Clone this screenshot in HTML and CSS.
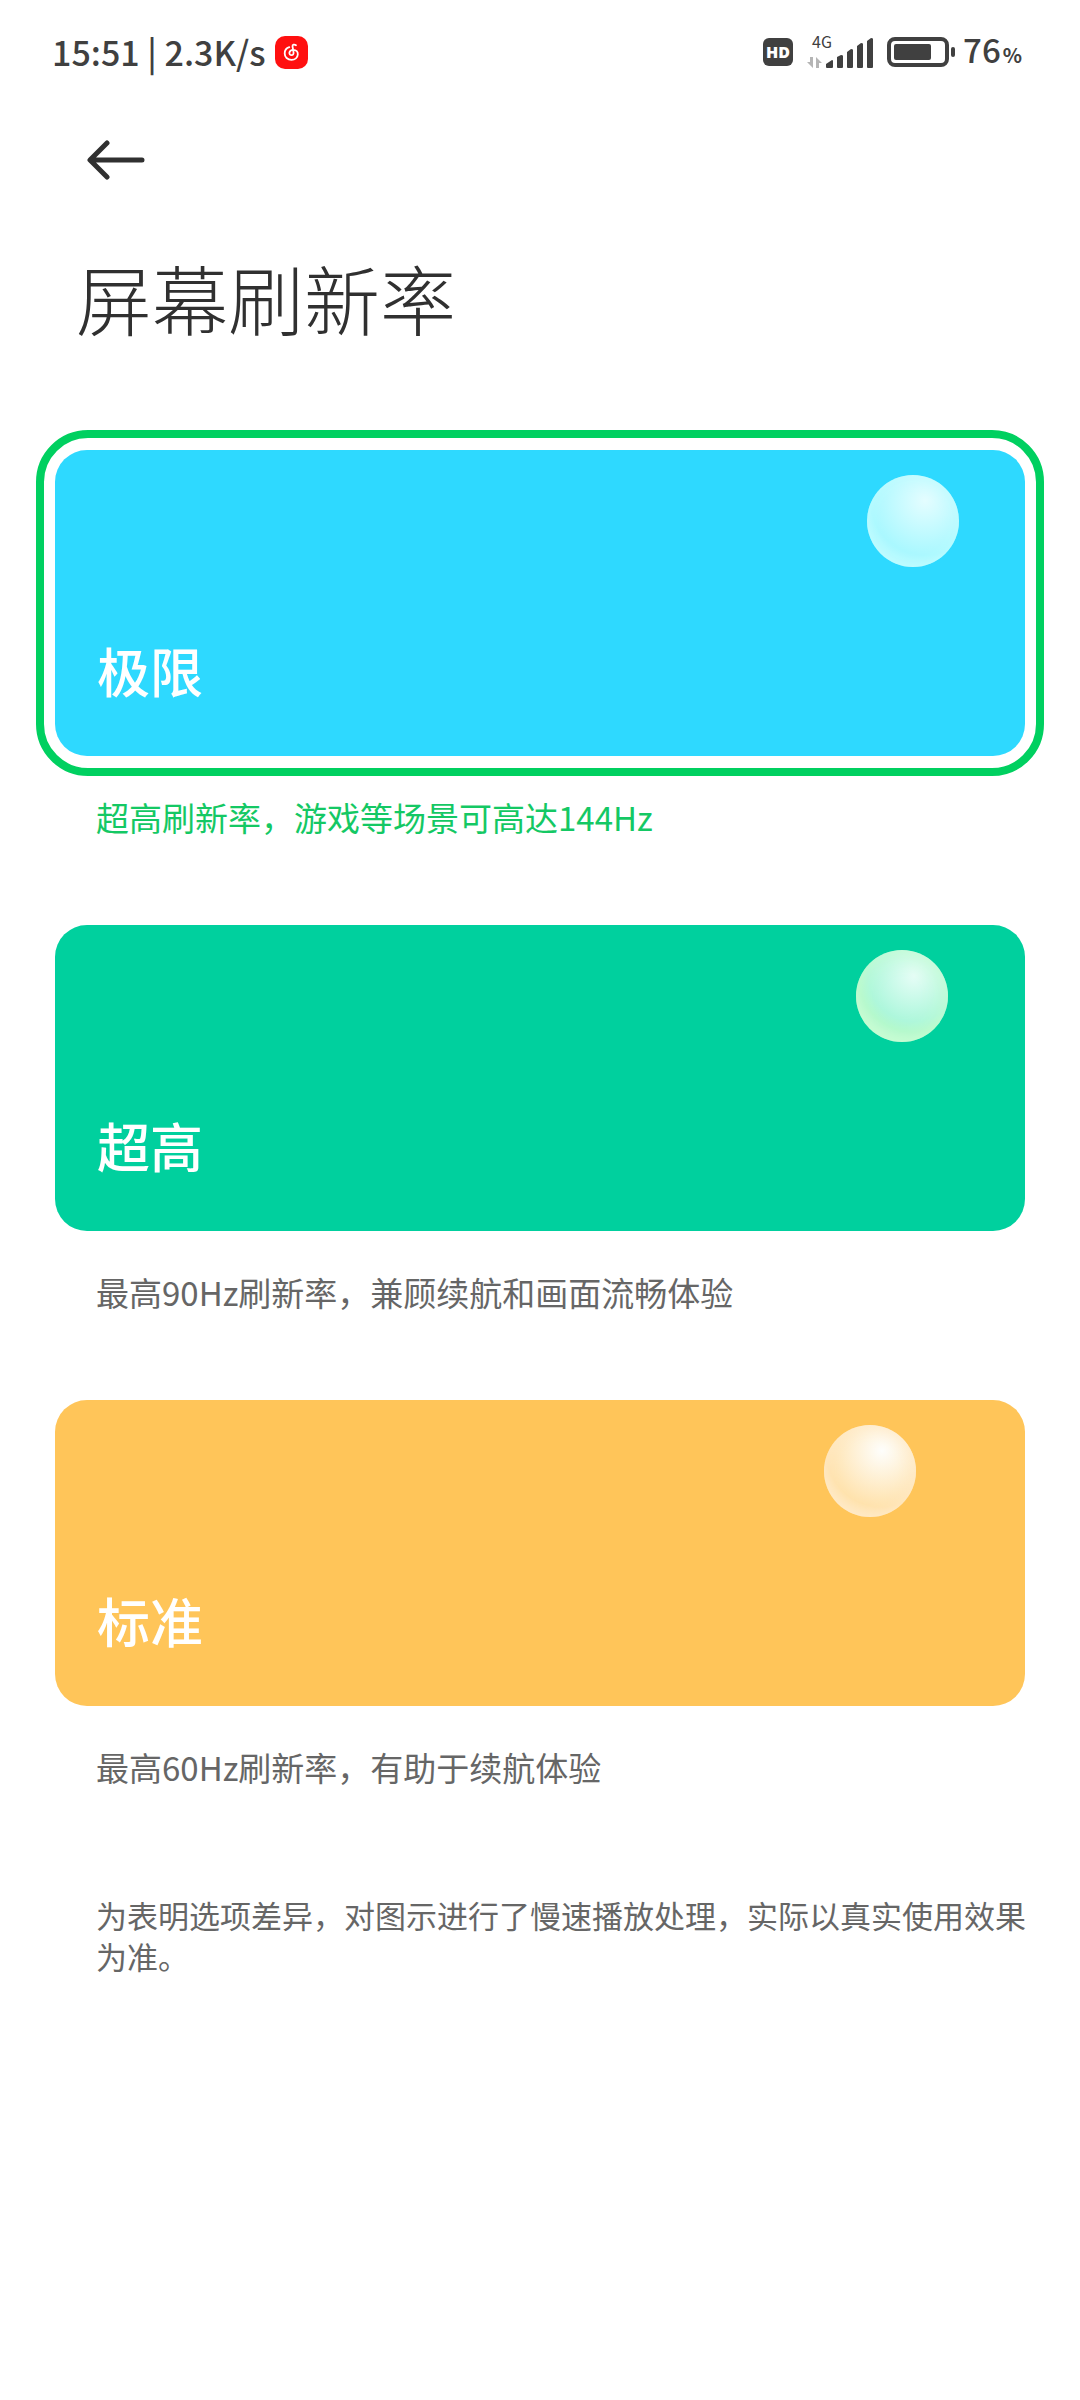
FILE: index.html
```html
<!DOCTYPE html>
<html lang="zh-CN">
<head>
    <meta charset="UTF-8">
    <meta name="viewport" content="width=device-width, initial-scale=1.0">
    <title>屏幕刷新率</title>
    <link rel="stylesheet" href="styles.css">
</head>
<body>
    <div class="status-bar">
        <div class="status-left">
            <span>15:51 | 2.3K/s</span>
            <svg width="33" height="33" viewBox="0 0 33 33" aria-hidden="true">
                <rect width="33" height="33" rx="10" fill="#ff1010"/>
                <path d="M21 9.200c-1.600-1.100-3.800-.6-3.500 1.200l1 5.600c.4 2.200-.7 3.200-1.900 3.200-1.500 0-2.400-1.100-2.200-2.500.3-1.900 2-2.800 4-2.800 2.800 0 4.600 1.900 4.400 4.500-.2 3.300-2.900 5.500-6.300 5.500-4 0-6.800-2.900-6.800-6.500 0-2.900 1.700-5.300 4.600-6.200" fill="none" stroke="#fff" stroke-width="1.800" stroke-linecap="round"/>
            </svg>
        </div>
        <div class="status-right">
            <span class="hd">HD</span>
            <div class="network">
                <span class="network-type">4G</span>
                <svg width="66" height="31" viewBox="0 0 66 31" aria-hidden="true">
                    <path d="M6 20v11L0 25h3v-5zM9 31V20l6 6h-3v5z" fill="#b5b5b5"/>
                    <path d="M19 27l6-4q1 0 1 1v6q0 1-1 1h-5q-1 0-1-1zM30 20l4-2q2 0 2 1v11q0 1-1 1h-4q-1 0-1-1zM40 15l4-3q2 0 2 1v17q0 1-1 1h-4q-1 0-1-1zM50 9l4-3q2 0 2 1v23q0 1-1 1h-4q-1 0-1-1zM60 4l4-3q2 0 2 1v28q0 1-1 1h-4q-1 0-1-1z" fill="#404040"/>
                </svg>
            </div>
            <svg width="70" height="30" viewBox="0 0 70 30" aria-hidden="true">
                <rect x="2" y="2" width="58" height="26" rx="6" fill="none" stroke="#404040" stroke-width="4"/>
                <rect x="7" y="7" width="37" height="16" rx="2" fill="#404040"/>
                <rect x="64" y="10" width="4" height="10" rx="2" fill="#404040"/>
            </svg>
            <span class="battery-level">76<small class="percent">%</small></span>
        </div>
    </div>

    <header class="header">
        <button class="back" type="button" aria-label="返回">
            <svg width="58" height="40" viewBox="0 0 58 40" aria-hidden="true">
                <path d="M20 3L3 20l17 17M4 20h51" fill="none" stroke="#303030" stroke-width="5" stroke-linecap="round" stroke-linejoin="round"/>
            </svg>
        </button>
        <h1>屏幕刷新率</h1>
    </header>

    <main class="options">
        <label class="option">
            <input type="radio" name="rate" value="144" checked>
            <span class="ring">
                <span class="card card-blue">
                    <span class="ball"></span>
                    <span class="name">极限</span>
                </span>
            </span>
            <span class="desc">超高刷新率，游戏等场景可高达144Hz</span>
        </label>
        <label class="option">
            <input type="radio" name="rate" value="90">
            <span class="ring">
                <span class="card card-green">
                    <span class="ball"></span>
                    <span class="name">超高</span>
                </span>
            </span>
            <span class="desc">最高90Hz刷新率，兼顾续航和画面流畅体验</span>
        </label>
        <label class="option">
            <input type="radio" name="rate" value="60">
            <span class="ring">
                <span class="card card-orange">
                    <span class="ball"></span>
                    <span class="name">标准</span>
                </span>
            </span>
            <span class="desc">最高60Hz刷新率，有助于续航体验</span>
        </label>
    </main>

    <p class="note">为表明选项差异，对图示进行了慢速播放处理，实际以真实使用效果为准。</p>
</body>
</html>
```

FILE: styles.css
```css
* {
    box-sizing: border-box;
}
body {
    margin: 0;
    background: #fff;
    color: #303030;
    font-family: "Noto Sans CJK SC", "Noto Sans", sans-serif;
}
svg {
    display: block;
}

/* status bar */
.status-bar {
    display: flex;
    justify-content: space-between;
    align-items: center;
    height: 104px;
    padding: 0 58px 0 52px;
    color: #404040;
    font-size: 33px;
    font-weight: 500;
    line-height: 40px;
}
.status-left,
.status-right {
    display: flex;
    align-items: center;
}
.status-left {
    gap: 9px;
    font-size: 34px;
}
.status-right {
    gap: 14px;
}
.hd {
    width: 30px;
    height: 28px;
    border-radius: 6px;
    background: #404040;
    color: #fff;
    font-family: "Open Sans", sans-serif;
    font-size: 16px;
    font-weight: 800;
    line-height: 28px;
    text-align: center;
}
.network {
    position: relative;
}
.network-type {
    position: absolute;
    top: -4px;
    left: 5px;
    font-size: 16px;
    font-weight: 400;
    line-height: 16px;
}
.battery-level {
    margin-left: -8px;
}
.percent {
    margin-left: 2px;
    font-size: 20px;
    font-weight: 700;
}

/* header */
.header {
    padding: 32px 76px 0;
}
.back {
    display: block;
    margin: 0;
    padding: 4px 11px;
    border: none;
    background: none;
    cursor: pointer;
}
h1 {
    margin: 61px 0 0;
    font-size: 76px;
    font-weight: 300;
    line-height: 104px;
}

/* refresh rate options */
.options {
    padding: 81px 36px 0;
}
.option {
    display: block;
    margin-bottom: 67px;
    cursor: pointer;
}
.option input {
    position: absolute;
    opacity: 0;
}
.ring {
    display: block;
    padding: 12px 11px;
    border: 8px solid transparent;
    border-radius: 52px;
}
.card {
    display: flex;
    flex-direction: column;
    justify-content: space-between;
    height: 306px;
    padding: 25px 66px 50px 42px;
    border-radius: 32px;
}
.ball {
    align-self: flex-end;
    width: 92px;
    height: 92px;
    border-radius: 50%;
}
.name {
    color: #fff;
    font-size: 53px;
    font-weight: 500;
    line-height: 72px;
}
.desc {
    display: block;
    padding: 20px 60px 0;
    color: #666;
    font-size: 33px;
    line-height: 42px;
}
.option input:checked + .ring {
    border-color: #00d060;
}
.option input:checked ~ .desc {
    color: #14c864;
}
.card-blue {
    background: #2ed9ff;
}
.card-blue .ball {
    background: radial-gradient(circle at 63% 28%, #e4fdff, #a9f8ff 62%, #c0fbff 82%);
    box-shadow: inset 0 0 16px #c0fcff;
}
.card-green {
    padding-right: 77px;
    background: #00d09e;
}
.card-green .ball {
    background: radial-gradient(circle at 63% 28%, #e6fdf6, #adf7dc 52%, #b0f8cc 64%, #ccfcd8 82%);
    box-shadow: inset 0 0 24px #c8fcd0;
}
.card-orange {
    padding-right: 109px;
    background: #ffc559;
}
.card-orange .ball {
    background: radial-gradient(circle at 63% 28%, #fefefc, #ffe2ac 64%, #ffeac6 82%);
    box-shadow: inset 0 0 16px #ffeaca;
}

.note {
    margin: 0;
    padding: 39px 48px 0 96px;
    color: #666;
    font-size: 31px;
    line-height: 41px;
}
```
